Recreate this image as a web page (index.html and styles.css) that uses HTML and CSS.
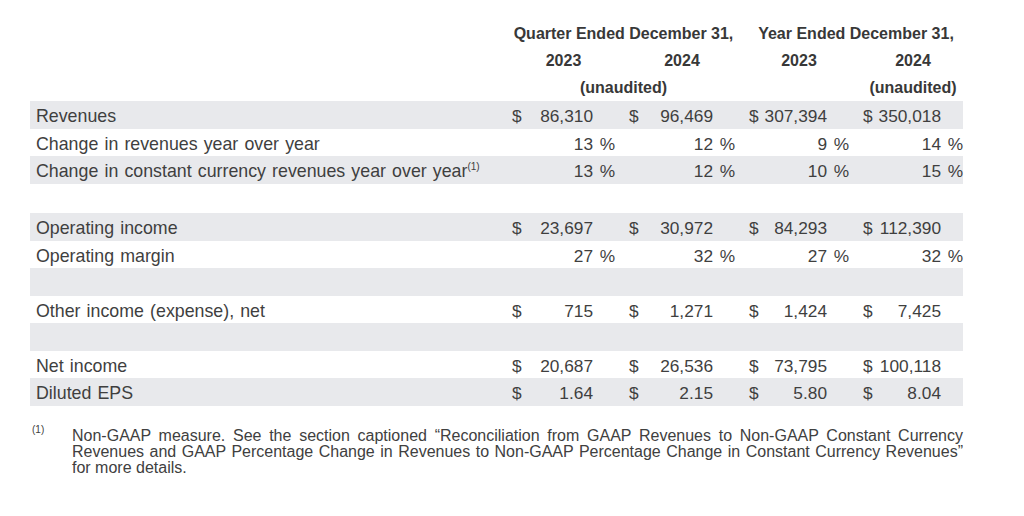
FILE: index.html
```html
<!DOCTYPE html>
<html>
<head>
<meta charset="utf-8">
<link rel="stylesheet" href="styles.css">
</head>
<body>
<div class="report">
  <div class="table">
    <div class="row head">
      <div class="label"></div>
      <div class="hcell span2">Quarter Ended December 31,</div>
      <div class="hcell span2">Year Ended December 31,</div>
    </div>
    <div class="row head">
      <div class="label"></div>
      <div class="hcell">2023</div>
      <div class="hcell">2024</div>
      <div class="hcell">2023</div>
      <div class="hcell">2024</div>
    </div>
    <div class="row head">
      <div class="label"></div>
      <div class="hcell span2">(unaudited)</div>
      <div class="hcell"></div>
      <div class="hcell">(unaudited)</div>
    </div>

    <div class="row shaded">
      <div class="label">Revenues</div>
      <div class="val"><span class="cur">$</span><span class="num">86,310</span><span class="pct"></span></div>
      <div class="val"><span class="cur">$</span><span class="num">96,469</span><span class="pct"></span></div>
      <div class="val"><span class="cur">$</span><span class="num">307,394</span><span class="pct"></span></div>
      <div class="val"><span class="cur">$</span><span class="num">350,018</span><span class="pct"></span></div>
    </div>
    <div class="row">
      <div class="label">Change in revenues year over year</div>
      <div class="val"><span class="num">13</span><span class="pct">%</span></div>
      <div class="val"><span class="num">12</span><span class="pct">%</span></div>
      <div class="val"><span class="num">9</span><span class="pct">%</span></div>
      <div class="val"><span class="num">14</span><span class="pct">%</span></div>
    </div>
    <div class="row shaded">
      <div class="label">Change in constant currency revenues year over year<sup class="note">(1)</sup></div>
      <div class="val"><span class="num">13</span><span class="pct">%</span></div>
      <div class="val"><span class="num">12</span><span class="pct">%</span></div>
      <div class="val"><span class="num">10</span><span class="pct">%</span></div>
      <div class="val"><span class="num">15</span><span class="pct">%</span></div>
    </div>

    <div class="spacer"></div>

    <div class="row shaded">
      <div class="label">Operating income</div>
      <div class="val"><span class="cur">$</span><span class="num">23,697</span><span class="pct"></span></div>
      <div class="val"><span class="cur">$</span><span class="num">30,972</span><span class="pct"></span></div>
      <div class="val"><span class="cur">$</span><span class="num">84,293</span><span class="pct"></span></div>
      <div class="val"><span class="cur">$</span><span class="num">112,390</span><span class="pct"></span></div>
    </div>
    <div class="row">
      <div class="label">Operating margin</div>
      <div class="val"><span class="num">27</span><span class="pct">%</span></div>
      <div class="val"><span class="num">32</span><span class="pct">%</span></div>
      <div class="val"><span class="num">27</span><span class="pct">%</span></div>
      <div class="val"><span class="num">32</span><span class="pct">%</span></div>
    </div>
    <div class="row shaded empty"></div>
    <div class="row">
      <div class="label">Other income (expense), net</div>
      <div class="val"><span class="cur">$</span><span class="num">715</span><span class="pct"></span></div>
      <div class="val"><span class="cur">$</span><span class="num">1,271</span><span class="pct"></span></div>
      <div class="val"><span class="cur">$</span><span class="num">1,424</span><span class="pct"></span></div>
      <div class="val"><span class="cur">$</span><span class="num">7,425</span><span class="pct"></span></div>
    </div>
    <div class="row shaded empty"></div>
    <div class="row">
      <div class="label">Net income</div>
      <div class="val"><span class="cur">$</span><span class="num">20,687</span><span class="pct"></span></div>
      <div class="val"><span class="cur">$</span><span class="num">26,536</span><span class="pct"></span></div>
      <div class="val"><span class="cur">$</span><span class="num">73,795</span><span class="pct"></span></div>
      <div class="val"><span class="cur">$</span><span class="num">100,118</span><span class="pct"></span></div>
    </div>
    <div class="row shaded">
      <div class="label">Diluted EPS</div>
      <div class="val"><span class="cur">$</span><span class="num">1.64</span><span class="pct"></span></div>
      <div class="val"><span class="cur">$</span><span class="num">2.15</span><span class="pct"></span></div>
      <div class="val"><span class="cur">$</span><span class="num">5.80</span><span class="pct"></span></div>
      <div class="val"><span class="cur">$</span><span class="num">8.04</span><span class="pct"></span></div>
    </div>
  </div>

  <div class="footnote">
    <div class="marker">(1)</div>
    <p class="fn-text">Non-GAAP measure. See the section captioned “Reconciliation from GAAP Revenues to Non-GAAP Constant Currency Revenues and GAAP Percentage Change in Revenues to Non-GAAP Percentage Change in Constant Currency Revenues” for more details.</p>
  </div>
</div>
</body>
</html>
```

FILE: styles.css
```css
html, body {
  margin: 0;
  padding: 0;
  background: #ffffff;
}

body {
  font-family: "Liberation Sans", Arial, sans-serif;
  color: #3f3f3f;
}

.report {
  padding: 20px 0 0 30px;
  width: 933px;
}

.table {
  display: flex;
  flex-direction: column;
}

.row {
  display: grid;
  grid-template-columns: 468px 103px 106px 100px 100px;
  column-gap: 14px;
  height: 27.5px;
  align-items: center;
  font-size: 17.3px;
  line-height: 27.5px;
}

.row.head {
  height: 27px;
  line-height: 27px;
  font-size: 16px;
  font-weight: bold;
  color: #383838;
}

.shaded {
  background: #e8e9ec;
}

.label {
  padding-left: 6px;
  padding-top: 2px;
  white-space: nowrap;
  font-size: 17.8px;
  word-spacing: 1.2px;
}

.note {
  font-size: 10px;
  line-height: 0;
  vertical-align: 7px;
  word-spacing: 0;
}

.hcell {
  text-align: center;
}

.span2 {
  grid-column: span 2;
}

.val {
  display: flex;
  padding-top: 2px;
}

.cur {
  width: 14px;
}

.num {
  flex: 1;
  text-align: right;
}

.pct {
  width: 22px;
  text-align: right;
}

.spacer {
  height: 29.5px;
}

.footnote {
  display: flex;
  margin-top: 22px;
  font-size: 16px;
  line-height: 16.3px;
  color: #404040;
}

.marker {
  width: 42px;
  flex: none;
  font-size: 10px;
  line-height: 12px;
  padding-left: 2px;
  margin-top: -4px;
  box-sizing: border-box;
}

.fn-text {
  margin: 0;
  width: 902px;
  text-align: justify;
}
```
